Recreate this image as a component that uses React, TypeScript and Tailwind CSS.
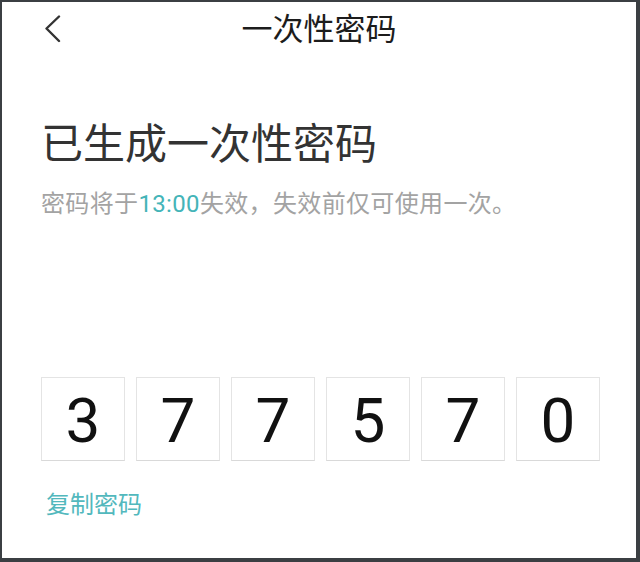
import React from "react";

const digits = ["3", "7", "7", "5", "7", "0"];

export default function App() {
  return (
    <div
      className="w-[640px] h-[562px] box-border bg-white border-t-2 border-l-2 border-r-4 border-b-4 border-[#3b3f43] flex flex-col"
      style={{ fontFamily: 'Roboto, "Noto Sans CJK SC", sans-serif' }}
    >
      <header className="h-[48px] pt-[6px] grid grid-cols-[1fr_auto_1fr] items-center">
        <div className="pl-[42px] flex items-center">
          <svg width="18" height="28" viewBox="0 0 18 28" fill="none">
            <path
              d="M15 1.5 L2.5 13.5 L15 26"
              stroke="#333333"
              strokeWidth="2.4"
              strokeLinecap="round"
              strokeLinejoin="round"
            />
          </svg>
        </div>
        <h1 className="text-[31px] leading-none text-[#1c1c1c] font-normal">一次性密码</h1>
        <div />
      </header>

      <main className="flex flex-col pl-[39px]">
        <h2 className="mt-[74px] text-[42px] leading-none text-[#333333] font-normal">
          已生成一次性密码
        </h2>
        <p className="mt-[26px] text-[24px] leading-none text-[#a3a3a3] tracking-[0.35px]">
          密码将于<span className="text-[#44b4b8]">13:00</span>失效，失效前仅可使用一次。
        </p>

        <div className="mt-[161px] flex gap-[11px]">
          {digits.map((d, i) => (
            <div
              key={i}
              className="w-[84px] h-[84px] box-border border border-[#e4e4e4] border-b-[#d9d9d9] bg-white flex items-center justify-center pt-[4px]"
            >
              <span className="text-[62px] leading-none text-[#111111]">{d}</span>
            </div>
          ))}
        </div>

        <a className="mt-[32px] pl-[5px] text-[24px] leading-none text-[#52b8bd] cursor-pointer w-fit">
          复制密码
        </a>
      </main>
    </div>
  );
}
